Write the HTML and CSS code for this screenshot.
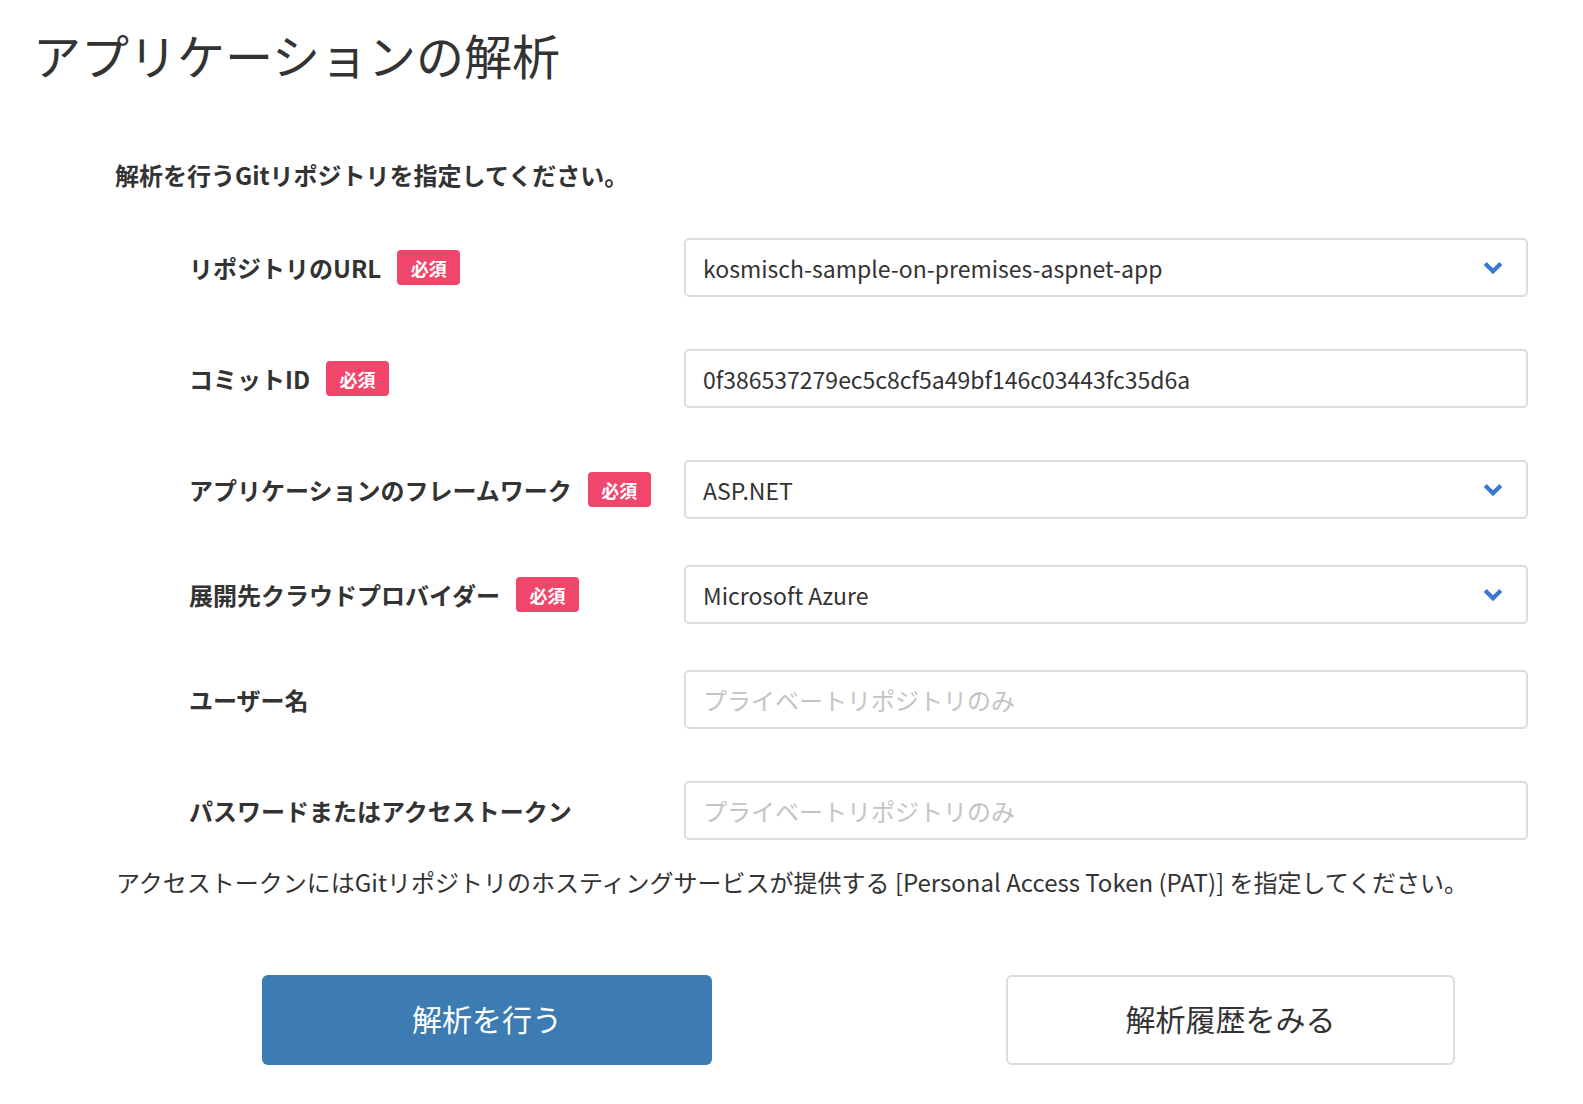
FILE: index.html
```html
<!DOCTYPE html>
<html lang="ja">
<head>
<meta charset="utf-8">
<title>アプリケーションの解析</title>
<link rel="stylesheet" href="styles.css">
</head>
<body>
<main class="page">
  <h1 class="title">アプリケーションの解析</h1>
  <p class="intro">解析を行うGitリポジトリを指定してください。</p>
  <div class="form">
    <div class="row row-a">
      <div class="label"><span>リポジトリのURL</span><span class="badge">必須</span></div>
      <div class="field select"><span class="value">kosmisch-sample-on-premises-aspnet-app</span><svg class="chev" viewBox="0 0 20 14" width="20" height="14"><path d="M2.2 2.6 L10 10.2 L17.8 2.6" fill="none" stroke="#3a78d6" stroke-width="4.2" stroke-linejoin="miter"/></svg></div>
    </div>
    <div class="row row-a">
      <div class="label"><span>コミットID</span><span class="badge">必須</span></div>
      <div class="field"><span class="value">0f386537279ec5c8cf5a49bf146c03443fc35d6a</span></div>
    </div>
    <div class="row row-a">
      <div class="label"><span>アプリケーションのフレームワーク</span><span class="badge">必須</span></div>
      <div class="field select"><span class="value">ASP.NET</span><svg class="chev" viewBox="0 0 20 14" width="20" height="14"><path d="M2.2 2.6 L10 10.2 L17.8 2.6" fill="none" stroke="#3a78d6" stroke-width="4.2" stroke-linejoin="miter"/></svg></div>
    </div>
    <div class="row row-b">
      <div class="label"><span>展開先クラウドプロバイダー</span><span class="badge">必須</span></div>
      <div class="field select"><span class="value">Microsoft Azure</span><svg class="chev" viewBox="0 0 20 14" width="20" height="14"><path d="M2.2 2.6 L10 10.2 L17.8 2.6" fill="none" stroke="#3a78d6" stroke-width="4.2" stroke-linejoin="miter"/></svg></div>
    </div>
    <div class="row row-b">
      <div class="label"><span>ユーザー名</span></div>
      <div class="field placeholder"><span>プライベートリポジトリのみ</span></div>
    </div>
    <div class="row row-a">
      <div class="label"><span>パスワードまたはアクセストークン</span></div>
      <div class="field placeholder"><span>プライベートリポジトリのみ</span></div>
    </div>
  </div>
  <p class="note">アクセストークンにはGitリポジトリのホスティングサービスが提供する [Personal Access Token (PAT)] を指定してください。</p>
  <div class="actions">
    <button class="btn btn-primary" type="button">解析を行う</button>
    <button class="btn btn-secondary" type="button">解析履歴をみる</button>
  </div>
</main>
</body>
</html>
```

FILE: styles.css
```css
html, body {
  margin: 0;
  padding: 0;
  background: #ffffff;
}
body {
  font-family: "Noto Sans CJK JP", "Noto Sans", sans-serif;
  color: #333333;
}
.page {
  padding: 25px 0 0 33px;
}
.title {
  margin: 0;
  font-size: 48px;
  font-weight: 400;
  line-height: 58px;
  color: #333333;
}
.intro {
  margin: 74px 0 0 82px;
  font-size: 24px;
  font-weight: 700;
  line-height: 36px;
}
.form {
  margin-top: 45px;
  margin-left: 157px;
}
.row {
  display: grid;
  grid-template-columns: 494px 844px;
  height: 59px;
  align-items: center;
}
.row-a + .row { margin-top: 52px; }
.row-a + .row-b { margin-top: 46px; }
.row-b + .row { margin-top: 46px; }
.row-b + .row-a { margin-top: 52px; }
.label {
  display: flex;
  align-items: center;
  gap: 16px;
  margin-left: -1px;
  font-size: 24px;
  font-weight: 700;
  line-height: 34px;
}
.badge {
  display: inline-flex;
  align-items: center;
  justify-content: center;
  width: 63px;
  height: 35px;
  border-radius: 4px;
  background: #f0466b;
  color: #ffffff;
  font-size: 18px;
  font-weight: 700;
}
.field {
  box-sizing: border-box;
  height: 59px;
  border: 2px solid #dcdcdc;
  border-radius: 5px;
  display: flex;
  align-items: center;
  justify-content: space-between;
  padding: 0 23px 0 17px;
  font-size: 24px;
  line-height: 34px;
  color: #333333;
}
.value { font-size: 23px; }
.placeholder { color: #c4c4c4; }
.chev { display: block; }
.note {
  margin: 25px 0 0 83px;
  font-size: 24px;
  line-height: 34px;
}
.actions {
  display: flex;
  margin: 76px 0 0 229px;
  gap: 294px;
}
.btn {
  box-sizing: border-box;
  width: 450px;
  height: 90px;
  border-radius: 6px;
  font-family: "Noto Sans CJK JP", "Noto Sans", sans-serif;
  font-size: 30px;
  line-height: 1;
  padding: 0 0 4px;
  cursor: pointer;
}
.btn-primary {
  background: #3c7cb2;
  border: none;
  color: #ffffff;
}
.btn-secondary {
  width: 449px;
  background: #ffffff;
  border: 2px solid #dcdcdc;
  color: #333333;
}
```
